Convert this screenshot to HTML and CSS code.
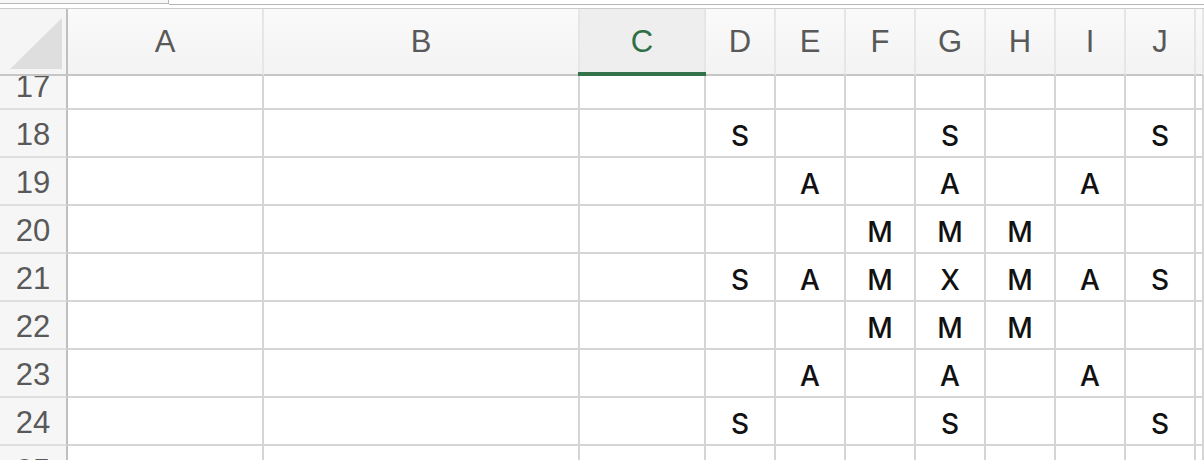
FILE: index.html
```html
<!DOCTYPE html>
<html lang="en">
<head>
    <meta charset="UTF-8">
    <meta name="viewport" content="width=device-width, initial-scale=1.0">
    <title>XMAS grid</title>
    <link rel="stylesheet" href="styles.css">
</head>
<body>
    <div class="topbar">
        <div class="namebox"></div>
        <div class="formula-edge"></div>
    </div>

    <div class="sheet">
        <div class="row head">
            <div class="corner">
                <svg width="66" height="65" viewBox="0 0 66 65"><polygon points="10,60 62,60 62,9" fill="#dedede"/></svg>
            </div>
            <div class="col-head">A</div>
            <div class="col-head">B</div>
            <div class="col-head active">C</div>
            <div class="col-head">D</div>
            <div class="col-head">E</div>
            <div class="col-head">F</div>
            <div class="col-head">G</div>
            <div class="col-head">H</div>
            <div class="col-head">I</div>
            <div class="col-head">J</div>
            <div class="col-head"></div>
        </div>

        <!-- row 17 is half scrolled under the header -->
        <div class="row partial">
            <div class="row-head"><span>17</span></div>
            <div class="cell"></div><div class="cell"></div><div class="cell"></div>
            <div class="cell"></div><div class="cell"></div><div class="cell"></div><div class="cell"></div>
            <div class="cell"></div><div class="cell"></div><div class="cell"></div><div class="cell"></div>
        </div>
        <div class="row">
            <div class="row-head">18</div>
            <div class="cell"></div><div class="cell"></div><div class="cell"></div>
            <div class="cell">S</div><div class="cell"></div><div class="cell"></div><div class="cell">S</div>
            <div class="cell"></div><div class="cell"></div><div class="cell">S</div><div class="cell"></div>
        </div>
        <div class="row">
            <div class="row-head">19</div>
            <div class="cell"></div><div class="cell"></div><div class="cell"></div>
            <div class="cell"></div><div class="cell">A</div><div class="cell"></div><div class="cell">A</div>
            <div class="cell"></div><div class="cell">A</div><div class="cell"></div><div class="cell"></div>
        </div>
        <div class="row">
            <div class="row-head">20</div>
            <div class="cell"></div><div class="cell"></div><div class="cell"></div>
            <div class="cell"></div><div class="cell"></div><div class="cell">M</div><div class="cell">M</div>
            <div class="cell">M</div><div class="cell"></div><div class="cell"></div><div class="cell"></div>
        </div>
        <div class="row">
            <div class="row-head">21</div>
            <div class="cell"></div><div class="cell"></div><div class="cell"></div>
            <div class="cell">S</div><div class="cell">A</div><div class="cell">M</div><div class="cell">X</div>
            <div class="cell">M</div><div class="cell">A</div><div class="cell">S</div><div class="cell"></div>
        </div>
        <div class="row">
            <div class="row-head">22</div>
            <div class="cell"></div><div class="cell"></div><div class="cell"></div>
            <div class="cell"></div><div class="cell"></div><div class="cell">M</div><div class="cell">M</div>
            <div class="cell">M</div><div class="cell"></div><div class="cell"></div><div class="cell"></div>
        </div>
        <div class="row">
            <div class="row-head">23</div>
            <div class="cell"></div><div class="cell"></div><div class="cell"></div>
            <div class="cell"></div><div class="cell">A</div><div class="cell"></div><div class="cell">A</div>
            <div class="cell"></div><div class="cell">A</div><div class="cell"></div><div class="cell"></div>
        </div>
        <div class="row">
            <div class="row-head">24</div>
            <div class="cell"></div><div class="cell"></div><div class="cell"></div>
            <div class="cell">S</div><div class="cell"></div><div class="cell"></div><div class="cell">S</div>
            <div class="cell"></div><div class="cell"></div><div class="cell">S</div><div class="cell"></div>
        </div>
        <div class="row">
            <div class="row-head">25</div>
            <div class="cell"></div><div class="cell"></div><div class="cell"></div>
            <div class="cell"></div><div class="cell"></div><div class="cell"></div><div class="cell"></div>
            <div class="cell"></div><div class="cell"></div><div class="cell"></div><div class="cell"></div>
        </div>
    </div>
</body>
</html>
```

FILE: styles.css
```css
html, body {
    margin: 0;
    height: 100%;
    overflow: hidden;
    background: #ffffff;
}
.topbar {
    display: flex;
    align-items: flex-start;
    height: 8px;
}
.namebox {
    width: 168px;
    height: 3px;
    background: #f8f8f8;
    border-right: 1px solid #b6b6b6;
    border-bottom: 1px solid #b6b6b6;
}
.formula-edge {
    flex: 1;
    height: 4px;
    border-bottom: 1px solid #b6b6b6;
}
.sheet {
    border-top: 1px solid #cbcbcb;
}
.row {
    display: grid;
    grid-template-columns: 68px 196px 316px 126px repeat(7, 70px) 1fr;
    height: 48px;
}
.row > div {
    box-sizing: border-box;
    border-right: 2px solid #d5d5d5;
    border-bottom: 2px solid #d5d5d5;
}
.head {
    height: 67px;
}
.head > div {
    border-right-color: #e6e6e6;
    border-bottom-color: #c6c6c6;
}
.corner {
    background: #f5f5f5;
    border-right-color: #bfbfbf !important;
}
.corner svg {
    display: block;
}
.col-head {
    display: flex;
    align-items: center;
    justify-content: center;
    background: linear-gradient(#fafafa, #f3f3f3);
    font-family: "Liberation Sans", Arial, sans-serif;
    font-size: 31px;
    color: #595959;
}
.col-head.active {
    position: relative;
    background: #eeeeee;
    color: #2f6f45;
}
.col-head.active::after {
    content: "";
    position: absolute;
    left: -2px;
    right: -2px;
    bottom: -2px;
    height: 4px;
    background: #33724a;
}
.row-head {
    display: flex;
    align-items: center;
    justify-content: center;
    padding-top: 3px;
    background: #f6f6f6;
    border-right-color: #bfbfbf !important;
    border-bottom-color: #dedede !important;
    font-family: "Liberation Sans", Arial, sans-serif;
    font-size: 31px;
    color: #595959;
    overflow: hidden;
}
.partial {
    height: 34px;
}
.partial .row-head {
    align-items: flex-end;
    padding-top: 0;
}
.partial .row-head span {
    line-height: 42px;
    display: block;
}
.cell {
    display: flex;
    align-items: center;
    justify-content: center;
    padding-top: 6px;
    font-family: Inter, "Open Sans", sans-serif;
    font-size: 28px;
    font-weight: 500;
    color: #111111;
}
```
